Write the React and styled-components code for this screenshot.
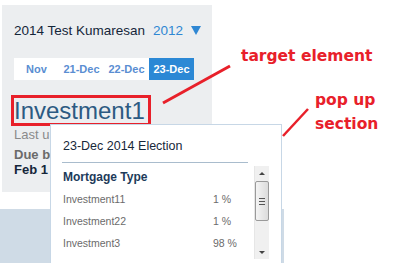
import styled, { createGlobalStyle } from 'styled-components'

const Global = createGlobalStyle`
  html, body { margin: 0; padding: 0; background: #fff; }
  body { font-family: "Liberation Sans", Arial, sans-serif; }
`

const Page = styled.div`
  position: relative;
  width: 397px;
  height: 263px;
  overflow: hidden;
  background: #fff;
`

const Panel = styled.section`
  box-sizing: border-box;
  width: 210px;
  height: 187px;
  margin: 5px 0 0 2px;
  padding: 16px 0 0 12px;
  background: #eceef0;
`

const Header = styled.div`
  display: flex;
  align-items: center;
  gap: 8px;
  height: 18px;
  font-size: 13.5px;
  color: #15263a;
`

const Year = styled.span`
  color: #2f87d3;
`

const Caret = styled.span`
  width: 0;
  height: 0;
  border-left: 5px solid transparent;
  border-right: 5px solid transparent;
  border-top: 9px solid #2f87d3;
`

const Tabs = styled.div`
  display: flex;
  width: 180px;
  height: 22px;
  margin-top: 19px;
  background: #fff;
`

const Tab = styled.div`
  width: 45px;
  display: flex;
  align-items: center;
  justify-content: center;
  font-size: 11px;
  font-weight: bold;
  color: ${p => (p.$active ? '#fff' : '#5a8ed2')};
  background: ${p => (p.$active ? '#2b88d5' : 'transparent')};
`

const Target = styled.div`
  display: inline-block;
  box-sizing: border-box;
  height: 31px;
  margin: 15px 0 1px -3px;
  padding: 0 3px 0 0;
  border: 3px solid #e8202a;
  font-size: 24px;
  line-height: 25px;
  color: #2c5a82;
  white-space: nowrap;
`

const Meta = styled.div`
  font-size: 13px;
  line-height: 15px;
  white-space: nowrap;
  color: ${p => p.$color};
  font-weight: ${p => (p.$bold ? 'bold' : 'normal')};
  margin-top: ${p => p.$gap}px;
`

const Band = styled.div`
  width: 284px;
  height: 54px;
  margin-top: 17px;
  background: #cfdbe6;
`

const Popup = styled.div`
  position: absolute;
  left: 50px;
  top: 124px;
  box-sizing: border-box;
  width: 232px;
  height: 150px;
  padding: 0 12px 0 11px;
  background: #fff;
  border: 1px solid #c7d7e6;
  border-bottom: none;
`

const PopTitle = styled.div`
  font-size: 12.5px;
  line-height: 15px;
  padding: 14px 0 8px 1px;
  color: #17283a;
  border-bottom: 1px solid #a9bccd;
  width: 185px;
`

const Body = styled.div`
  display: flex;
  justify-content: space-between;
`

const List = styled.div`
  width: 185px;
  padding: 7px 0 0 1px;
`

const Group = styled.div`
  font-size: 12px;
  font-weight: bold;
  color: #1d3b5a;
  line-height: 14px;
  margin-bottom: 4px;
`

const Row = styled.div`
  display: flex;
  height: 22px;
  align-items: center;
  font-size: 10.5px;
  color: #6b6b6b;
`

const Name = styled.span`
  width: 150px;
`

const Scroll = styled.div`
  display: flex;
  flex-direction: column;
  align-items: center;
  box-sizing: border-box;
  width: 15px;
  height: 93px;
  margin-top: 3px;
  background: #f0f0f0;
  border-left: 1px solid #e6e6e6;
`

const Arrow = styled.div`
  width: 0;
  height: 0;
  margin: ${p => (p.$down ? 'auto 0 5px' : '6px 0 0')};
  border-left: 3px solid transparent;
  border-right: 3px solid transparent;
  ${p => (p.$down ? 'border-top' : 'border-bottom')}: 3px solid #444;
`

const Thumb = styled.div`
  box-sizing: border-box;
  width: 14px;
  height: 40px;
  margin-top: 6px;
  border: 1px solid #9a9a9a;
  border-radius: 2px;
  background: linear-gradient(to right, #f4f4f4, #dcdcdc);
  display: flex;
  flex-direction: column;
  justify-content: center;
  align-items: center;
  gap: 2px;
`

const Grip = styled.span`
  width: 6px;
  height: 1px;
  background: #555;
`

const Note = styled.div`
  position: absolute;
  left: ${p => p.$x}px;
  top: ${p => p.$y}px;
  font-family: "DejaVu Sans", Verdana, sans-serif;
  font-weight: bold;
  font-size: 15.5px;
  line-height: 24px;
  color: #e8202a;
  white-space: nowrap;
`

const Lines = styled.svg`
  position: absolute;
  left: 0;
  top: 0;
  pointer-events: none;
`

const rows = [
  ['Investment11', '1 %'],
  ['Investment22', '1 %'],
  ['Investment3', '98 %'],
]

export default function App() {
  return (
    <Page>
      <Global />
      <Panel>
        <Header>
          <span>2014 Test Kumaresan</span>
          <Year>2012</Year>
          <Caret />
        </Header>
        <Tabs>
          <Tab>Nov</Tab>
          <Tab>21-Dec</Tab>
          <Tab>22-Dec</Tab>
          <Tab $active>23-Dec</Tab>
        </Tabs>
        <Target>Investment1</Target>
        <Meta $color="#8a8a8a" $gap={0}>Last u</Meta>
        <Meta $color="#6a6a6a" $bold $gap={5}>Due b</Meta>
        <Meta $color="#15263a" $bold $gap={0}>Feb 1</Meta>
      </Panel>
      <Band />
      <Popup>
        <PopTitle>23-Dec 2014 Election</PopTitle>
        <Body>
          <List>
            <Group>Mortgage Type</Group>
            {rows.map(([n, v]) => (
              <Row key={n}>
                <Name>{n}</Name>
                <span>{v}</span>
              </Row>
            ))}
          </List>
          <Scroll>
            <Arrow />
            <Thumb>
              <Grip />
              <Grip />
              <Grip />
            </Thumb>
            <Arrow $down />
          </Scroll>
        </Body>
      </Popup>
      <Note $x={241} $y={44}>target element</Note>
      <Note $x={315} $y={88}>pop up<br />section</Note>
      <Lines width="397" height="263">
        <line x1="163" y1="103" x2="230" y2="66" stroke="#e8202a" strokeWidth="3" />
        <line x1="308" y1="109" x2="283" y2="136" stroke="#e8202a" strokeWidth="2.5" />
      </Lines>
    </Page>
  )
}
